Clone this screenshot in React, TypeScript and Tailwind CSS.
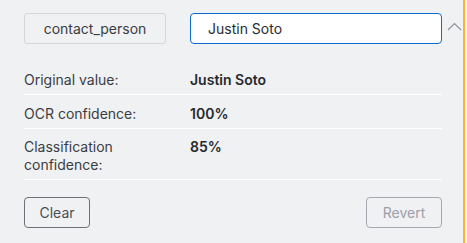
import React from "react";

export default function App() {
  return (
    <div
      className="w-[467px] h-[243px] bg-[#f0f1f3] flex overflow-hidden"
      style={{ fontFamily: "Inter, 'Noto Sans', sans-serif" }}
    >
      <div className="flex-1 pl-6 pt-[13px]">
        <div className="w-[418px]">
          <div className="flex gap-6">
            <div className="w-[142px] h-[31px] rounded-[3px] border border-[#d3d6db] bg-[#f0f1f3] flex items-center justify-center text-[14px] text-[#3a3d42]">
              contact_person
            </div>
            <div className="flex-1 h-[31px] rounded-[4px] border border-[#0b6ccb] bg-white flex items-center px-[17px] text-[14px] text-[#2a2d31]">
              Justin Soto
            </div>
          </div>
          <div className="mt-[17px] text-[14px] leading-[17px]">
            <div className="flex gap-6 pt-[10px] pb-[6px] border-b border-white">
              <div className="w-[142px] text-[#3a3d42]">Original value:</div>
              <div className="font-semibold text-[#26292d]">Justin Soto</div>
            </div>
            <div className="flex gap-6 pt-[10px] pb-[6px] border-b border-white">
              <div className="w-[142px] text-[#3a3d42]">OCR confidence:</div>
              <div className="font-semibold text-[#26292d]">100%</div>
            </div>
            <div className="flex gap-6 pt-[9px] pb-[5px] border-b border-white">
              <div className="w-[142px] text-[#3a3d42] leading-[18px]">
                Classification
                <br />
                confidence:
              </div>
              <div className="font-semibold text-[#26292d] leading-[18px]">85%</div>
            </div>
          </div>
          <div className="mt-[17px] flex justify-between">
            <button className="w-[66px] h-[31px] rounded-[4px] border border-[#6b7079] text-[14px] text-[#4a4e55]">
              Clear
            </button>
            <button className="w-[76px] h-[31px] rounded-[4px] border border-[#a3a8b0] text-[14px] text-[#9ba0a8]">
              Revert
            </button>
          </div>
        </div>
      </div>
      <div className="w-[21px] flex justify-start pt-[22px] pl-[5px]">
        <svg width="15" height="9" viewBox="0 0 15 9" fill="none">
          <path d="M1 8 L7.5 1.5 L14 8" stroke="#8e939b" strokeWidth="1.2" />
        </svg>
      </div>
      <div className="w-[2px] h-full bg-[#f6b731]" />
      <div className="w-[2px]" />
    </div>
  );
}
